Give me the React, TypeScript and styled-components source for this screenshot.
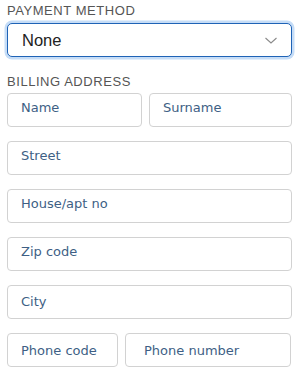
import React from "react";
import styled, { createGlobalStyle } from "styled-components";

const Global = createGlobalStyle`
  html, body { margin: 0; padding: 0; background: #ffffff; }
  * { box-sizing: border-box; }
`;

const Page = styled.div`
  width: 302px;
  padding: 3px 0 0 7px;
  display: flex;
  flex-direction: column;
`;

const SectionLabel = styled.div<{ $top?: number }>`
  margin-top: ${(p) => p.$top ?? 0}px;
  font-family: "Liberation Sans", Arial, sans-serif;
  font-size: 13px;
  line-height: 15px;
  letter-spacing: 0.55px;
  color: #555555;
  text-transform: uppercase;
`;

const SelectBox = styled.div`
  margin-top: 5px;
  width: 285px;
  height: 34px;
  border: 1.5px solid #1f63b6;
  border-radius: 5px;
  box-shadow: 0 0 0 2.5px #c6ddf7;
  display: flex;
  align-items: center;
  justify-content: space-between;
  padding: 1px 14px 0 14px;
  background: #ffffff;
`;

const SelectValue = styled.span`
  font-family: "Liberation Sans", Arial, sans-serif;
  font-size: 16.5px;
  color: #222222;
`;

const Fields = styled.div`
  margin-top: 4px;
  display: flex;
  flex-direction: column;
  gap: 14px;
`;

const Row = styled.div<{ $cols: string }>`
  display: grid;
  grid-template-columns: ${(p) => p.$cols};
  gap: 7px;
`;

const Field = styled.input<{ $pad?: number; $width?: number; $shift?: number }>`
  width: ${(p) => p.$width ?? 285}px;
  height: 34px;
  border: 1px solid #d2d2d2;
  border-radius: 4px;
  padding: ${(p) => 6 + (p.$shift ?? 0)}px 8px ${(p) => 11 - (p.$shift ?? 0)}px
    ${(p) => p.$pad ?? 13}px;
  font-family: "DejaVu Sans", Verdana, sans-serif;
  font-size: 13px;
  line-height: 15px;
  color: #3e5f85;
  background: #ffffff;
  outline: none;
  &::placeholder {
    color: #3e5f85;
    opacity: 1;
  }
`;

const Chevron = () => (
  <svg width="12" height="7" viewBox="0 0 12 7" aria-hidden="true">
    <path d="M0.5 1 L6 6 L11.5 1" fill="none" stroke="#8a8a8a" strokeWidth="1.1" />
  </svg>
);

export default function App() {
  return (
    <>
      <Global />
      <Page>
        <SectionLabel>Payment method</SectionLabel>
        <SelectBox>
          <SelectValue>None</SelectValue>
          <Chevron />
        </SelectBox>
        <SectionLabel $top={17}>Billing address</SectionLabel>
        <Fields>
          <Row $cols="135px 143px">
            <Field placeholder="Name" $width={135} />
            <Field placeholder="Surname" $width={143} />
          </Row>
          <Field placeholder="Street" />
          <Field placeholder="House/apt no" />
          <Field placeholder="Zip code" />
          <Field placeholder="City" $shift={2} />
          <Row $cols="111px 166px">
            <Field placeholder="Phone code" $width={111} $shift={3} />
            <Field placeholder="Phone number" $width={166} $pad={18} $shift={3} />
          </Row>
        </Fields>
      </Page>
    </>
  );
}
